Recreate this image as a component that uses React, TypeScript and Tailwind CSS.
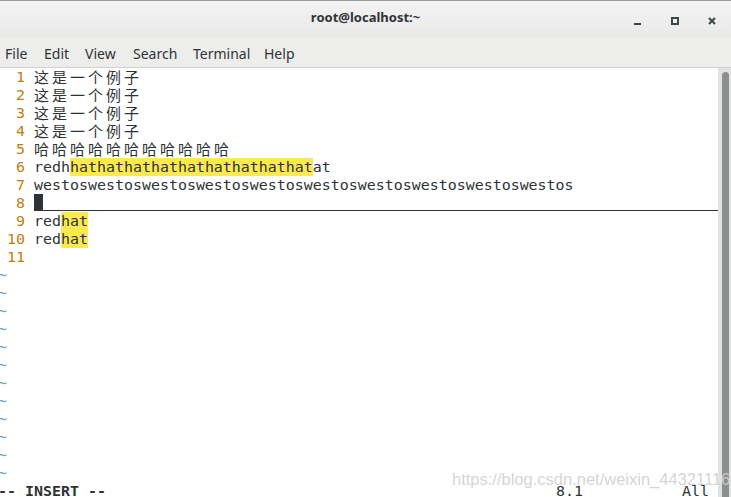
import React from "react";

type Seg = { t: string; hl?: boolean; cjk?: boolean };

const mono = { fontFamily: '"DejaVu Sans Mono", "Noto Sans CJK SC", monospace' };

const rows: Seg[][] = [
  [{ t: "这是一个例子", cjk: true }],
  [{ t: "这是一个例子", cjk: true }],
  [{ t: "这是一个例子", cjk: true }],
  [{ t: "这是一个例子", cjk: true }],
  [{ t: "哈哈哈哈哈哈哈哈哈哈哈", cjk: true }],
  [{ t: "redh" }, { t: "hathathathathathathathathat", hl: true }, { t: "at" }],
  [{ t: "westoswestoswestoswestoswestoswestoswestoswestoswestoswestos" }],
  [],
  [{ t: "red" }, { t: "hat", hl: true }],
  [{ t: "red" }, { t: "hat", hl: true }],
  [],
];

function Segment({ seg }: { seg: Seg }) {
  if (seg.cjk) {
    return (
      <>
        {seg.t.split("").map((c, i) => (
          <span
            key={i}
            className="inline-block w-[18px] text-left"
            style={{ fontFamily: '"Noto Sans CJK SC", sans-serif' }}
          >
            {c}
          </span>
        ))}
      </>
    );
  }
  return <span className={seg.hl ? "bg-[#fce94f]" : ""}>{seg.t}</span>;
}

function Gutter({ n }: { n: number }) {
  return (
    <span className="inline-block w-[36px] text-[#c17d11] whitespace-pre">
      {String(n).padStart(3, " ") + " "}
    </span>
  );
}

export default function App() {
  return (
    <div className="relative w-[731px] h-[497px] overflow-hidden bg-white">
      {/* title bar */}
      <div
        className="h-[37px] border-t border-[#9a9a9a] bg-gradient-to-b from-[#f3f3f3] to-[#e9e9e8] flex items-center relative"
        style={{ fontFamily: '"Noto Sans", sans-serif' }}
      >
        <div className="flex-1 text-center text-[13px] font-bold text-[#2e3436] pb-[2px]">root@localhost:~</div>
        <div className="absolute right-[15px] top-[16px] flex items-start">
          <div className="w-[7px] h-[2px] bg-[#3d4649] mt-[6px] mr-[30px]" />
          <div className="w-[8px] h-[8px] border-2 border-[#3d4649] mr-[29px]" />
          <svg width="8" height="8" viewBox="0 0 8 8">
            <path d="M1 1 L7 7 M7 1 L1 7" stroke="#3d4649" strokeWidth="2" />
          </svg>
        </div>
      </div>
      {/* menu bar */}
      <div
        className="h-[31px] bg-[#ededec] border-b border-[#d2d2d2] flex items-center pl-[5px] pt-[2px] text-[14px] text-[#2e3436]"
        style={{ fontFamily: '"Noto Sans", sans-serif' }}
      >
        <span className="w-[39px]">File</span>
        <span className="w-[41px]">Edit</span>
        <span className="w-[48px]">View</span>
        <span className="w-[60px]">Search</span>
        <span className="w-[71px]">Terminal</span>
        <span>Help</span>
      </div>
      {/* terminal */}
      <div className="flex">
        <div className="w-[718px] overflow-hidden">
          <div className="ml-[-2px] w-[720px] text-[14.95px] leading-[18px] text-[#2e3436]" style={mono}>
            {rows.map((r, i) => (
              <div key={i} className="h-[18px] flex whitespace-pre">
                <Gutter n={i + 1} />
                {i === 7 ? (
                  <div className="flex-1 h-[17px] border-b border-[#2e3436] flex">
                    <span className="inline-block w-[9px] h-[17px] bg-[#2e3436]" />
                  </div>
                ) : (
                  <span>
                    {r.map((s, j) => (
                      <Segment key={j} seg={s} />
                    ))}
                  </span>
                )}
              </div>
            ))}
            {Array.from({ length: 12 }).map((_, i) => (
              <div key={"t" + i} className="h-[18px] text-[#729fcf]">
                ~
              </div>
            ))}
            <div className="h-[18px] flex whitespace-pre">
              <span className="font-bold w-[558px]">-- INSERT --</span>
              <span className="w-[126px]">8.1</span>
              <span>All</span>
            </div>
          </div>
        </div>
        <div className="w-[13px] h-[432px] bg-[#e2e2e2] pt-[4px] pl-[4px]">
          <div className="w-[7px] h-full bg-[#8c8f8f] rounded-t-[4px]" />
        </div>
      </div>
      {/* watermark */}
      <div
        className="absolute left-[452px] top-[467px] text-[16.5px] text-[#cfcfcf]/90"
        style={{ fontFamily: '"Liberation Sans", Arial, sans-serif' }}
      >
        https://blog.csdn.net/weixin_44321116
      </div>
    </div>
  );
}
